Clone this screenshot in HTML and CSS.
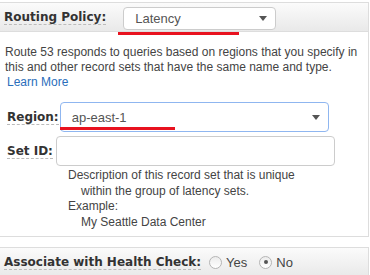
FILE: index.html
```html
<!DOCTYPE html>
<html>
<head>
    <title>Record Set - Routing Policy</title>
    <link rel="stylesheet" href="styles.css">
</head>
<body>
    <div class="panel">
        <div class="panel-head">
            <span class="label">Routing Policy:</span>
            <div class="select select-policy">
                <span>Latency</span>
                <span class="arrow"></span>
                <div class="mark mark-policy"></div>
            </div>
        </div>
        <div class="panel-body">
            <p class="info">Route 53 responds to queries based on regions that you specify in this and other record sets that have the same name and type.<br><a class="link" href="#">Learn More</a></p>
            <div class="field-row">
                <span class="label">Region:</span>
                <div class="select select-region">
                    <span>ap-east-1</span>
                    <span class="arrow"></span>
                    <div class="mark mark-region"></div>
                </div>
            </div>
            <div class="field-row">
                <span class="label">Set ID:</span>
                <div class="text-input"></div>
            </div>
            <div class="help">
                <div>Description of this record set that is unique</div>
                <div class="indent">within the group of latency sets.</div>
                <div>Example:</div>
                <div class="indent">My Seattle Data Center</div>
            </div>
        </div>
    </div>

    <div class="panel panel-bottom">
        <div class="panel-head">
            <span class="label">Associate with Health Check:</span>
            <label class="radio"><span class="dot"></span>Yes</label>
            <label class="radio"><span class="dot checked"></span>No</label>
        </div>
    </div>
</body>
</html>
```

FILE: styles.css
```css
body {
    margin: 0;
    padding-top: 2px;
    width: 369px;
    background-color: #fff;
    font-family: "Liberation Sans", Arial, sans-serif;
    font-size: 12px;
    color: #444;
}

.panel {
    border-top: 1px solid #ddd;
    border-right: 1px solid #ddd;
    border-bottom: 1px solid #ddd;
}

.panel-head {
    display: flex;
    align-items: center;
    height: 28px;
    padding-left: 4px;
    background: linear-gradient(#fbfbfb, #e9e9e9);
    border-bottom: 1px solid #ddd;
}

.panel-bottom {
    margin-top: 10px;
    border-bottom: none;
}

.panel-bottom .panel-head {
    border-bottom: none;
}

.label {
    font-family: "DejaVu Sans", Verdana, sans-serif;
    font-weight: bold;
    font-size: 12px;
    color: #333;
    border-bottom: 1px dashed #bbb;
    line-height: 14px;
}

.select {
    position: relative;
    display: flex;
    align-items: center;
    box-sizing: border-box;
    background-color: #fff;
    border: 1px solid #ccc;
    border-radius: 4px;
    font-size: 13px;
    color: #555;
}

.select-policy {
    margin-left: 17px;
    margin-top: 2px;
    width: 153px;
    height: 23px;
    padding-left: 11px;
}

.select-region {
    margin-left: 1px;
    width: 269px;
    height: 30px;
    padding-left: 11px;
    border-color: #8fb6f0;
}

.arrow {
    position: absolute;
    right: 8px;
    top: 50%;
    margin-top: -2px;
    border-left: 4px solid transparent;
    border-right: 4px solid transparent;
    border-top: 5px solid #555;
}

.mark {
    position: absolute;
    height: 3px;
    background-color: #e8121f;
}

.mark-policy {
    left: -6px;
    top: 24px;
    width: 121px;
}

.mark-region {
    left: -1px;
    top: 24px;
    width: 115px;
}

.panel-body {
    padding: 13px 0 6px 5px;
}

.info {
    margin: 0 0 12px 0;
    line-height: 15px;
}

.link {
    color: #2a6ebb;
    text-decoration: none;
    margin-left: 2px;
}

.field-row {
    display: flex;
    align-items: center;
    margin-bottom: 4px;
    padding-left: 2px;
}

.text-input {
    margin-left: 3px;
    width: 279px;
    height: 30px;
    box-sizing: border-box;
    border: 1px solid #ccc;
    border-radius: 4px;
}

.help {
    margin-top: -2px;
    padding-left: 63px;
    line-height: 15.5px;
    color: #444;
}

.indent {
    padding-left: 13px;
}

.radio {
    display: flex;
    align-items: center;
    font-family: "Liberation Sans", Arial, sans-serif;
    font-size: 13px;
    color: #444;
    margin-right: 12px;
}

.radio:first-of-type {
    margin-left: 8px;
}

.dot {
    position: relative;
    width: 13px;
    height: 13px;
    box-sizing: border-box;
    border: 1px solid #b5b5b5;
    border-radius: 50%;
    background: linear-gradient(#ececec, #fff);
    margin-right: 4px;
}

.dot.checked::after {
    content: "";
    position: absolute;
    left: 3.5px;
    top: 3.5px;
    width: 4px;
    height: 4px;
    border-radius: 50%;
    background-color: #555;
}
```
